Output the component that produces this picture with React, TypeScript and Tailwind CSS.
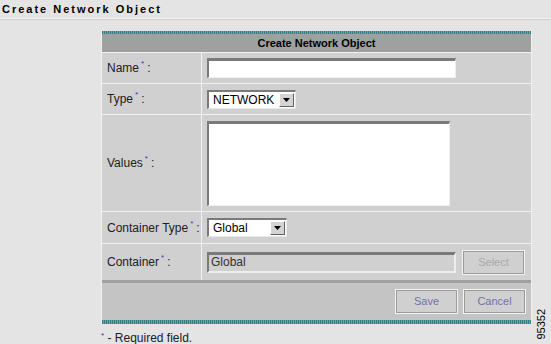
import React from 'react'

// Small inset-looking dropdown used for Type / Container Type
function Dropdown({ value, width }: { value: string; width: string }) {
  return (
    <div
      className={`${width} h-[19px] flex items-stretch bg-white border-t-2 border-l-2 border-t-[#7a7a7a] border-l-[#7a7a7a] border-b border-r border-b-[#e8e8e8] border-r-[#e8e8e8]`}
    >
      <span className="flex-1 pl-[4px] leading-[16px] text-[12px] text-black">{value}</span>
      <span className="w-[15px] my-[1px] mr-[1px] bg-[#d4d4d4] border-t border-l border-white border-b border-r border-b-[#606060] border-r-[#606060] flex items-center justify-center">
        <svg width="7" height="4" viewBox="0 0 7 4">
          <path d="M0 0h7L3.5 4z" fill="#000" />
        </svg>
      </span>
    </div>
  )
}

function Req() {
  return <span className="text-[8px] text-[#3030c0] relative -top-[6px] ml-[2px]">*</span>
}

function Label({ text }: { text: string }) {
  return (
    <div className="w-[100px] shrink-0 border-r border-[#f2f2f2] flex items-center pl-[5px] text-[12px] text-[#202020]">
      <span>
        {text}
        <Req />
        <span className="ml-[3px]">:</span>
      </span>
    </div>
  )
}

function Btn({ text, disabled }: { text: string; disabled?: boolean }) {
  return (
    <div className="w-[63px] h-[25px] border border-[#f4f4f4] p-0 flex">
      <div
        className={`flex-1 border border-[#9a9a9a] bg-[#d0d0d0] flex items-center justify-center text-[11px] ${
          disabled ? 'text-[#a8a8a8]' : 'text-[#7070a8]'
        }`}
      >
        {text}
      </div>
    </div>
  )
}

export default function App() {
  return (
    <div
      className="w-[551px] h-[344px] bg-[#e4e4e4] relative overflow-hidden"
      style={{ fontFamily: '"Liberation Sans", Arial, sans-serif' }}
    >
      {/* Page title */}
      <div className="h-[19px] border-b border-[#f4f4f4] shadow-[0_1px_0_#cfcfcf] pl-[2px] pt-[3px] text-[11px] font-bold tracking-[2px] text-black leading-[12px]">
        Create Network Object
      </div>

      {/* Panel */}
      <div className="ml-[101px] mt-[12px] w-[431px] border-l border-r border-[#f0f0f0]">
        <div className="h-[3px] bg-[repeating-linear-gradient(90deg,#2f7f7f_0px,#2f7f7f_1px,#68a8a8_1px,#68a8a8_2px)]" />
        <div className="h-[18px] bg-[#a0a0a0] flex items-center justify-center text-[11px] font-bold text-black">
          Create Network Object
        </div>

        <div className="bg-[#d0d0d0]">
          {/* Name */}
          <div className="h-[31px] flex border-t border-[#f2f2f2]">
            <Label text="Name" />
            <div className="flex-1 flex items-center pl-[5px]">
              <div className="w-[249px] h-[20px] bg-white border-t-[3px] border-l-[2px] border-t-[#7a7a7a] border-l-[#7a7a7a] border-b border-r border-b-[#eeeeee] border-r-[#eeeeee]" />
            </div>
          </div>

          {/* Type */}
          <div className="h-[31px] flex border-t border-[#f2f2f2]">
            <Label text="Type" />
            <div className="flex-1 flex items-center pl-[5px]">
              <Dropdown value="NETWORK" width="w-[89px]" />
            </div>
          </div>

          {/* Values */}
          <div className="h-[97px] flex border-t border-[#f2f2f2]">
            <Label text="Values" />
            <div className="flex-1 flex items-center pl-[5px]">
              <div className="w-[243px] h-[85px] bg-white border-t-[3px] border-l-[2px] border-t-[#7a7a7a] border-l-[#7a7a7a] border-b border-r border-b-[#eeeeee] border-r-[#eeeeee]" />
            </div>
          </div>

          {/* Container Type */}
          <div className="h-[32px] flex border-t border-[#f2f2f2]">
            <Label text="Container Type" />
            <div className="flex-1 flex items-center pl-[5px]">
              <Dropdown value="Global" width="w-[80px]" />
            </div>
          </div>

          {/* Container */}
          <div className="h-[37px] flex border-t border-[#f2f2f2]">
            <Label text="Container" />
            <div className="flex-1 flex items-center pl-[5px] gap-[6px]">
              <div className="w-[249px] h-[21px] bg-[#d0d0d0] border-t-[3px] border-l-[2px] border-t-[#7a7a7a] border-l-[#7a7a7a] border-b-2 border-r-2 border-b-[#eeeeee] border-r-[#eeeeee] pl-[2px] text-[12px] leading-[15px] text-[#303030]">
                Global
              </div>
              <Btn text="Select" disabled />
            </div>
          </div>

          {/* Divider */}
          <div className="h-[3px] bg-[#a0a0a0]" />

          {/* Buttons */}
          <div className="h-[37px] bg-[#c4c4c4] flex items-center justify-end gap-[5px] pr-[5px]">
            <Btn text="Save" />
            <Btn text="Cancel" />
          </div>
        </div>
        <div className="h-[4px] bg-[repeating-linear-gradient(90deg,#2f7f7f_0px,#2f7f7f_1px,#68a8a8_1px,#68a8a8_2px)]" />
      </div>

      {/* Footnote */}
      <div className="ml-[101px] mt-[7px] text-[12px] text-[#202020] leading-[14px]">
        <span className="text-[8px] text-[#3030c0] relative -top-[4px]">*</span> - Required field.
      </div>

      {/* Figure number */}
      <div className="absolute left-[533px] top-[306px] w-[16px] h-[36px] flex items-center justify-center">
        <span className="-rotate-90 text-[11px] text-black whitespace-nowrap">95352</span>
      </div>
    </div>
  )
}
